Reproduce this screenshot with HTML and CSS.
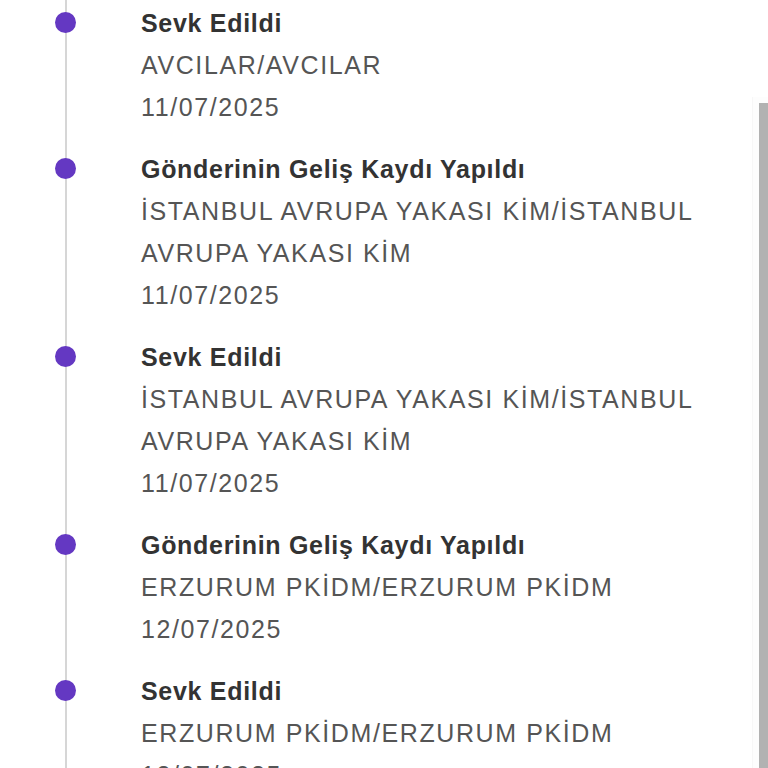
FILE: index.html
```html
<!DOCTYPE html>
<html lang="tr">
<head>
  <meta charset="UTF-8">
  <meta name="viewport" content="width=device-width, initial-scale=1.0">
  <title>Gönderi Takibi</title>
  <link rel="stylesheet" href="styles.css">
</head>
<body>
  <ul class="timeline">
    <li class="event">
      <div class="event-title">Sevk Edildi</div>
      <div class="event-place">AVCILAR/AVCILAR</div>
      <div class="event-date">11/07/2025</div>
    </li>
    <li class="event">
      <div class="event-title">Gönderinin Geliş Kaydı Yapıldı</div>
      <div class="event-place">İSTANBUL AVRUPA YAKASI KİM/İSTANBUL AVRUPA YAKASI KİM</div>
      <div class="event-date">11/07/2025</div>
    </li>
    <li class="event">
      <div class="event-title">Sevk Edildi</div>
      <div class="event-place">İSTANBUL AVRUPA YAKASI KİM/İSTANBUL AVRUPA YAKASI KİM</div>
      <div class="event-date">11/07/2025</div>
    </li>
    <li class="event">
      <div class="event-title">Gönderinin Geliş Kaydı Yapıldı</div>
      <div class="event-place">ERZURUM PKİDM/ERZURUM PKİDM</div>
      <div class="event-date">12/07/2025</div>
    </li>
    <li class="event">
      <div class="event-title">Sevk Edildi</div>
      <div class="event-place">ERZURUM PKİDM/ERZURUM PKİDM</div>
      <div class="event-date">12/07/2025</div>
    </li>
  </ul>

  <!-- kaydırma çubuğu -->
  <div class="scroll-track"></div>
  <div class="scroll-thumb"></div>
</body>
</html>
```
FILE: styles.css
```css
html, body {
  height: 100%;
  overflow: hidden;
}
body {
  margin: 0;
  background: #fff;
  font-family: "Liberation Sans", Arial, sans-serif;
  color: #555;
}
.timeline {
  list-style: none;
  margin: 0 0 0 65px;
  padding: 2px 28px 0 74px;
  border-left: 2px solid #d6d6d6;
}
.event {
  position: relative;
  margin-bottom: 20px;
  font-size: 25px;
  line-height: 42px;
}
.event::before {
  content: "";
  position: absolute;
  left: -86px;
  top: 10px;
  width: 21px;
  height: 21px;
  border-radius: 50%;
  background: #6438c2;
}
.event-title {
  font-weight: 700;
  color: #333;
  letter-spacing: 0.7px;
}
.event-place,
.event-date {
  letter-spacing: 1.6px;
}

/* kaydırma çubuğu */
.scroll-track {
  position: fixed;
  top: 97px;
  right: 0;
  bottom: 0;
  width: 15px;
  border-left: 1px solid #f7f7f7;
  background: #fdfdfd;
}
.scroll-thumb {
  position: fixed;
  top: 103px;
  right: 0;
  bottom: 0;
  width: 9px;
  background: #b2b2b2;
}
```
